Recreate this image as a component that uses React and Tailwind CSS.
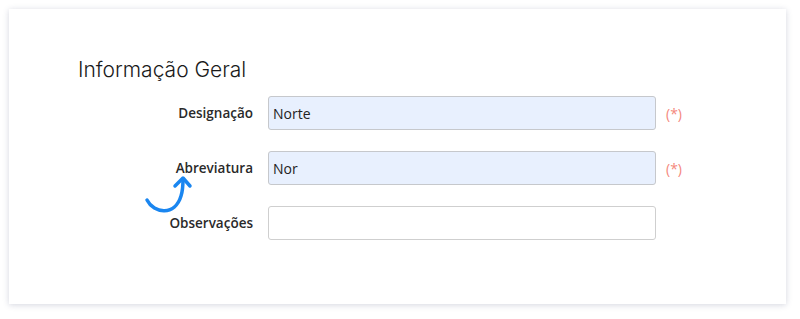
import React from 'react';

const fields = [
  { label: 'Designação', value: 'Norte', filled: true, required: true },
  { label: 'Abreviatura', value: 'Nor', filled: true, required: true },
  { label: 'Observações', value: '', filled: false, required: false },
];

function CurvedArrow() {
  return (
    <svg
      className="absolute left-[140px] top-[170px]"
      width="60"
      height="50"
      viewBox="0 0 60 50"
      fill="none"
      stroke="#1a86f0"
      strokeWidth="3.5"
      strokeLinecap="round"
      strokeLinejoin="round"
    >
      <path d="M7 30 C 14 44, 35 46, 41 26 C 43 20, 43 14, 43 9" />
      <path d="M35 16 L 43 8 L 50 16" />
    </svg>
  );
}

export default function App() {
  return (
    <div className="relative w-[800px] h-[319px] bg-white p-[9px]" style={{ fontFamily: '"Open Sans", sans-serif' }}>
      <div className="w-[777px] h-[295px] bg-white shadow-[0_1px_6px_rgba(60,70,110,0.22)]">
        <h1
          className="pl-[69px] pt-[47px] text-[21px] leading-[28px] font-light text-[#1a1a1a]"
          style={{ fontFamily: 'Inter, "Open Sans", sans-serif' }}
        >
          Informação Geral
        </h1>
        <div className="mt-[12px] flex flex-col gap-[21px]">
          {fields.map((f) => (
            <div key={f.label} className="flex items-center h-[34px]">
              <label className="w-[259px] pr-[15px] text-right text-[13.5px] font-semibold text-[#2a2a2a]">
                {f.label}
              </label>
              <div
                className={`w-[388px] h-[34px] rounded-[3px] border flex items-center px-[4px] text-[14px] text-[#222] ${
                  f.filled ? 'bg-[#e8f0fe] border-[#c6c8cc]' : 'bg-white border-[#cfcfcf]'
                }`}
              >
                {f.value}
              </div>
              {f.required && (
                <span className="ml-[10px] text-[14px] text-[#f4877c]">(*)</span>
              )}
            </div>
          ))}
        </div>
      </div>
      <CurvedArrow />
    </div>
  );
}
